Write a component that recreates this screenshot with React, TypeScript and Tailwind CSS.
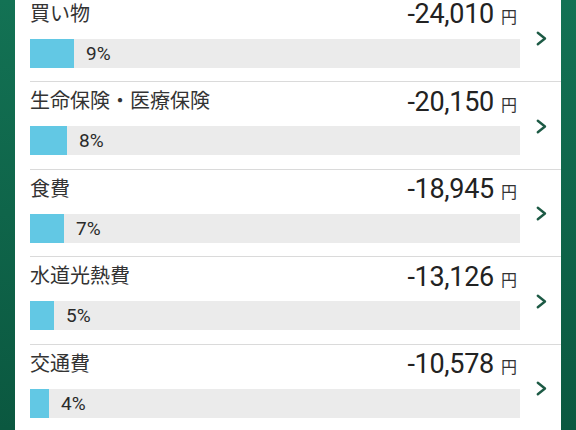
import React from 'react';

interface Expense {
  label: string;
  amount: string;
  percent: string;
  fill: number;
}

const expenses: Expense[] = [
  { label: '買い物', amount: '-24,010', percent: '9%', fill: 44 },
  { label: '生命保険・医療保険', amount: '-20,150', percent: '8%', fill: 37 },
  { label: '食費', amount: '-18,945', percent: '7%', fill: 34 },
  { label: '水道光熱費', amount: '-13,126', percent: '5%', fill: 24 },
  { label: '交通費', amount: '-10,578', percent: '4%', fill: 19 },
];

function Chevron() {
  return (
    <svg width="11" height="15" viewBox="0 0 11 15" fill="none">
      <polyline
        points="1.8,1.8 9,7.5 1.8,13.2"
        stroke="#1d5a45"
        strokeWidth="2.4"
        strokeLinecap="round"
        strokeLinejoin="round"
      />
    </svg>
  );
}

export default function App() {
  return (
    <div
      className="w-[576px] h-[430px] overflow-hidden bg-linear-to-b from-[#137254] to-[#0b5840] px-[15px]"
      style={{ fontFamily: '"Noto Sans", "Noto Sans CJK JP", sans-serif' }}
    >
      <div className="h-full bg-white overflow-hidden">
        {/* list is scrolled a few pixels past the first row's top */}
        <div className="flex flex-col mt-[-5.5px]">
          {expenses.map((item) => (
            <div
              key={item.label}
              className="ml-[15px] h-[87.5px] shrink-0 flex border-b-[1.5px] border-[#dadada]"
            >
              <div className="w-[490px] flex flex-col">
                <div className="h-[38px] flex items-center justify-between">
                  <span className="text-[20px] leading-none text-[#333333]">{item.label}</span>
                  <span className="flex items-baseline mr-[3px] mt-[2px]">
                    <span className="font-['Roboto',sans-serif] text-[27px] leading-none tracking-[-0.3px] text-[#222222]">
                      {item.amount}
                    </span>
                    <span className="text-[16px] leading-none text-[#333333] ml-[7px]">円</span>
                  </span>
                </div>
                <div className="mt-[6px] h-[29px] bg-[#ebebeb] flex items-center">
                  <div className="h-full bg-[#62c8e4]" style={{ width: item.fill }} />
                  <span className="ml-[12px] font-['Roboto',sans-serif] text-[19px] leading-none text-[#2a2a2a]">
                    {item.percent}
                  </span>
                </div>
              </div>
              <div className="flex-1 flex items-center justify-center pl-[1px] pt-[2px]">
                <Chevron />
              </div>
            </div>
          ))}
        </div>
      </div>
    </div>
  );
}
